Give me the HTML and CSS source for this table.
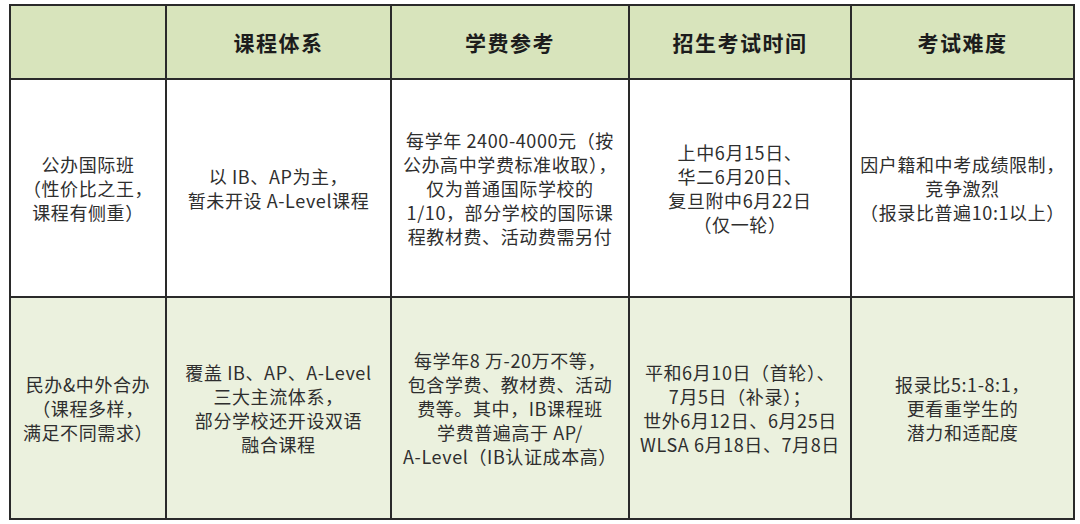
FILE: index.html
```html
<!DOCTYPE html>
<html lang="zh-CN">
<head>
<meta charset="utf-8">
<title>国际班对比</title>
<link rel="stylesheet" href="styles.css">
</head>
<body>
<table class="grid">
  <colgroup>
    <col class="c1"><col class="c2"><col class="c3"><col class="c4"><col class="c5">
  </colgroup>
  <thead>
    <tr class="head">
      <th></th>
      <th>课程体系</th>
      <th>学费参考</th>
      <th>招生考试时间</th>
      <th>考试难度</th>
    </tr>
  </thead>
  <tbody>
    <tr class="row-a">
      <td>公办国际班<br>（性价比之王，<br>课程有侧重）</td>
      <td>以 IB、AP为主，<br>暂未开设 A-Level课程</td>
      <td>每学年 2400-4000元（按<br>公办高中学费标准收取），<br>仅为普通国际学校的<br>1/10，部分学校的国际课<br>程教材费、活动费需另付</td>
      <td>上中6月15日、<br>华二6月20日、<br>复旦附中6月22日<br>（仅一轮）</td>
      <td>因户籍和中考成绩限制，<br>竞争激烈<br>（报录比普遍10:1以上）</td>
    </tr>
    <tr class="row-b">
      <td>民办&amp;中外合办<br>（课程多样，<br>满足不同需求）</td>
      <td>覆盖 IB、AP、A-Level<br>三大主流体系，<br>部分学校还开设双语<br>融合课程</td>
      <td>每学年8 万-20万不等，<br>包含学费、教材费、活动<br>费等。其中，IB课程班<br>学费普遍高于 AP/<br>A-Level（IB认证成本高）</td>
      <td>平和6月10日（首轮）、<br>7月5日（补录）；<br>世外6月12日、6月25日<br>WLSA 6月18日、7月8日</td>
      <td>报录比5:1-8:1，<br>更看重学生的<br>潜力和适配度</td>
    </tr>
  </tbody>
</table>
</body>
</html>
```

FILE: styles.css
```css
html, body {
  margin: 0;
  padding: 0;
  background: #ffffff;
}

body {
  padding: 4px 0 0 9px;
  font-family: "Noto Sans CJK SC", "Noto Sans", sans-serif;
}

.grid {
  border-collapse: collapse;
  table-layout: fixed;
  width: 1064px;
}

.c1 { width: 156px; }
.c2 { width: 225px; }
.c3 { width: 238px; }
.c4 { width: 222px; }
.c5 { width: 223px; }

.grid th,
.grid td {
  border: 2px solid #2a2a2a;
  text-align: center;
  vertical-align: middle;
  padding: 0 2px;
  white-space: nowrap;
}

.head th {
  height: 72px;
  background: #d8e4bc;
  color: #1c1c1c;
  font-size: 21px;
  font-weight: 700;
  letter-spacing: 1.5px;
}

.grid td {
  font-size: 18px;
  line-height: 24px;
  color: #2e2e2e;
  letter-spacing: 0.6px;
}

.row-a td {
  height: 216px;
  background: #ffffff;
}

.row-b td {
  height: 220px;
  background: #ebf1de;
}
```
